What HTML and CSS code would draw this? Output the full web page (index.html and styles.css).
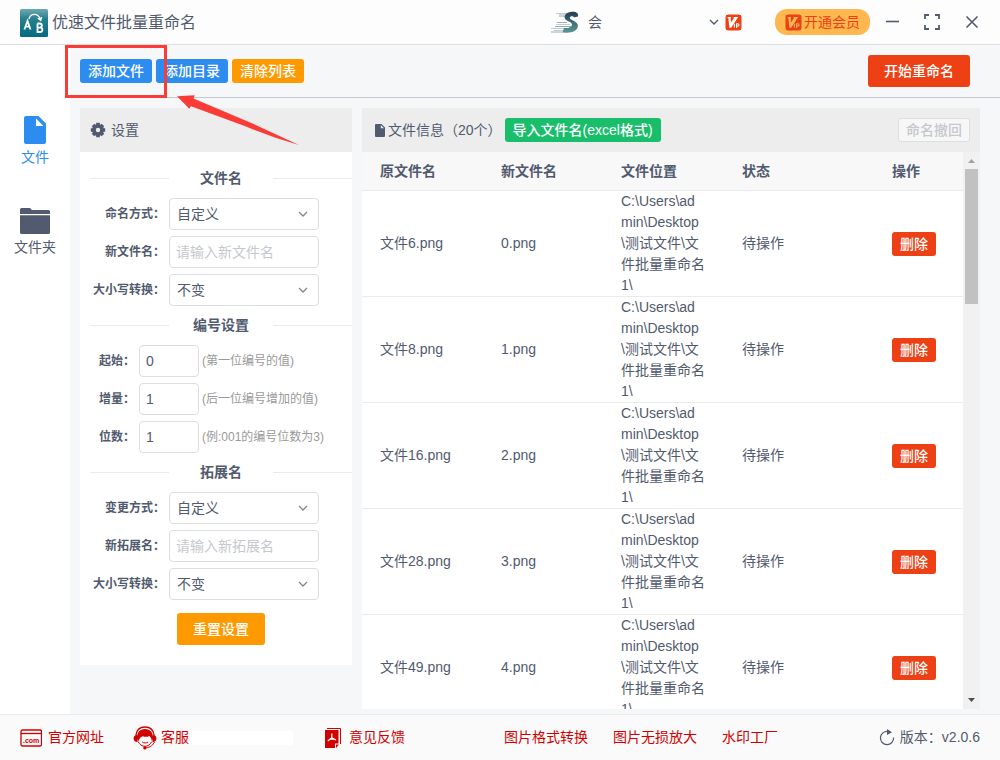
FILE: index.html
```html
<!DOCTYPE html>
<html lang="zh-CN">
<head>
<meta charset="utf-8">
<title>优速文件批量重命名</title>
<link rel="stylesheet" href="styles.css">
</head>
<body>
<svg class="defs" width="0" height="0" aria-hidden="true">
  <symbol id="vip" viewBox="0 0 17 17">
    <rect width="17" height="17" rx="3" fill="#ed4014"/>
    <path class="vip-mark" d="M2 3h4.200l-.5 1 .3 4.600L9 4l-.8-1h5L6.200 13.800H4.400L3.300 4z"/>
    <path class="vip-line" d="M9.400 9.800v3.800M11.600 14V9.800h1.300a1.100 1.100 0 0 1 0 2.200h-1.300" fill="none" stroke-width="1.100"/>
  </symbol>
  <symbol id="chevron" viewBox="0 0 10 6">
    <path d="M1 1l4 4 4-4" fill="none" stroke="currentColor" stroke-width="1.300"/>
  </symbol>
</svg>

<header class="titlebar">
  <svg class="logo" width="28" height="28" viewBox="0 0 28 28" aria-hidden="true">
    <defs><linearGradient id="teal" x1="0" y1="0" x2="0" y2="1"><stop offset="0" stop-color="#6fa9b2"/><stop offset=".35" stop-color="#26808f"/><stop offset="1" stop-color="#046a80"/></linearGradient></defs>
    <rect width="28" height="28" rx="1.500" fill="url(#teal)"/>
    <path d="M4.400 20.500L7.500 12l3 8.500M5.400 17.600h4.200M17.500 14.500v8.500h2.700a2.200 2.200 0 0 0 0-4.400h-2.700M17.500 14.500h2.300a2 2 0 0 1 0 4.100" fill="none" stroke="#fff" stroke-width="1.800"/>
    <path d="M9 10c1.500-6 9-6.500 11.500.5M17.800 9.200l2.900 2.200.9-3.300" fill="none" stroke="#fff" stroke-width="1.400"/>
  </svg>
  <h1 class="title">优速文件批量重命名</h1>
  <button class="user" type="button">
    <svg width="30" height="24" viewBox="0 0 30 24" aria-hidden="true">
      <defs><linearGradient id="ess" x1="0" y1="0" x2="0" y2="1"><stop offset="0" stop-color="#26394b"/><stop offset=".5" stop-color="#3d6f7b"/><stop offset="1" stop-color="#5c9792"/></linearGradient></defs>
      <path d="M6 3.500h15M9 6.500h8M6 14.500h14M1 18.500h14M4 20.500h12" stroke="#c3ced3" stroke-width="1.200"/>
      <path d="M9 5h9M7 12.500h10M5 16.500h16M1 22h16" stroke="#93b3b8" stroke-width="1.200"/>
      <path d="M28 6.500c.8-3.500-2-5-6-4.700-5 .3-8 3-7.300 6.200.6 3.300 7.600 3.600 7.300 6.700-.2 2.600-4 3.500-8 3.300l-1.500 4.300c8 1.400 15-.8 15.400-6.300.4-5-8.200-5.600-8.100-8.300.1-1.600 3.400-2.300 4.200-.2z" fill="url(#ess)"/>
    </svg>
    <span class="user-name">会</span>
    <svg width="10" height="6" aria-hidden="true"><use href="#chevron"/></svg>
    <svg class="vip" width="17" height="17" aria-hidden="true"><use href="#vip"/></svg>
  </button>
  <button class="join" type="button">
    <svg class="vip vip-gold" width="17" height="17" aria-hidden="true"><use href="#vip"/></svg>开通会员
  </button>
  <div class="window-controls">
    <button type="button" aria-label="最小化"><svg width="16" height="16" viewBox="0 0 16 16"><path d="M2 7.500h13" stroke="currentColor" stroke-width="1.600"/></svg></button>
    <button type="button" aria-label="最大化"><svg width="16" height="16" viewBox="0 0 16 16"><path d="M1 5V1h4M11 1h4v4M15 11v4h-4M5 15H1v-4" fill="none" stroke="currentColor" stroke-width="1.800"/></svg></button>
    <button type="button" aria-label="关闭"><svg width="16" height="16" viewBox="0 0 16 16"><path d="M2.500 2.500l11 11M13.500 2.500l-11 11" stroke="currentColor" stroke-width="1.600"/></svg></button>
  </div>
</header>

<div class="workspace">
  <nav class="sidebar">
    <a class="nav-item active" href="#files">
      <svg width="22" height="28" viewBox="0 0 22 28" aria-hidden="true"><path fill-rule="evenodd" d="M2 0h12.500L22 7.500V26a2 2 0 0 1-2 2H2a2 2 0 0 1-2-2V2a2 2 0 0 1 2-2zm10 2.500v7.500h7.500z" fill="currentColor"/></svg>
      文件
    </a>
    <a class="nav-item" href="#folders">
      <svg width="30" height="26" viewBox="0 0 30 26" aria-hidden="true"><path d="M0 6V1.500Q0 0 1.500 0H10l2 2h16.500Q30 2 30 3.500V6zM0 7.200h30V24.500q0 1.500-1.500 1.500h-27Q0 26 0 24.500z" fill="currentColor"/></svg>
      文件夹
    </a>
  </nav>

  <main class="main">
    <div class="toolbar">
      <button class="btn primary" type="button">添加文件</button>
      <button class="btn primary" type="button">添加目录</button>
      <button class="btn warning" type="button">清除列表</button>
      <button class="btn danger large start" type="button">开始重命名</button>
    </div>

    <div class="panels">
      <section class="settings">
        <h2 class="panel-head">
          <svg width="16" height="16" viewBox="0 0 16 16" aria-hidden="true">
            <path d="M8 .8v14.400M.8 8h14.400M3 3l10 10M13 3L3 13" stroke="currentColor" stroke-width="3.600"/>
            <circle cx="8" cy="8" r="6" fill="currentColor"/><circle cx="8" cy="8" r="2.200" fill="#ededed"/>
          </svg>
          <span>设置</span>
        </h2>
        <form class="form">
          <h3 class="divider"><span>文件名</span></h3>
          <div class="fields">
            <div class="field"><label for="naming">命名方式：</label><span class="select"><select id="naming"><option>自定义</option></select><svg width="10" height="6" aria-hidden="true"><use href="#chevron"/></svg></span></div>
            <div class="field"><label for="newname">新文件名：</label><input id="newname" type="text" placeholder="请输入新文件名"></div>
            <div class="field"><label for="case1">大小写转换：</label><span class="select"><select id="case1"><option>不变</option></select><svg width="10" height="6" aria-hidden="true"><use href="#chevron"/></svg></span></div>
          </div>
          <h3 class="divider"><span>编号设置</span></h3>
          <div class="fields numbers">
            <div class="field"><label for="from">起始：</label><input id="from" type="text" value="0"><span class="hint">(第一位编号的值)</span></div>
            <div class="field"><label for="step">增量：</label><input id="step" type="text" value="1"><span class="hint">(后一位编号增加的值)</span></div>
            <div class="field"><label for="digits">位数：</label><input id="digits" type="text" value="1"><span class="hint">(例:001的编号位数为3)</span></div>
          </div>
          <h3 class="divider"><span>拓展名</span></h3>
          <div class="fields">
            <div class="field"><label for="change">变更方式：</label><span class="select"><select id="change"><option>自定义</option></select><svg width="10" height="6" aria-hidden="true"><use href="#chevron"/></svg></span></div>
            <div class="field"><label for="newext">新拓展名：</label><input id="newext" type="text" placeholder="请输入新拓展名"></div>
            <div class="field"><label for="case2">大小写转换：</label><span class="select"><select id="case2"><option>不变</option></select><svg width="10" height="6" aria-hidden="true"><use href="#chevron"/></svg></span></div>
          </div>
          <button class="btn warning large reset" type="button">重置设置</button>
        </form>
      </section>

      <section class="files">
        <div class="panel-head files-head">
          <svg width="10" height="13" viewBox="0 0 10 13" aria-hidden="true"><path fill-rule="evenodd" d="M1 0h5.500L10 3.500V12q0 1-1 1H1q-1 0-1-1V1Q0 0 1 0zm4.800 1v3.200H9z" fill="currentColor"/></svg>
          <h2 class="files-title">文件信息（20个）</h2>
          <button class="btn success" type="button">导入文件名(excel格式)</button>
          <button class="btn undo" type="button" disabled>命名撤回</button>
        </div>
        <div class="list">
          <div class="list-view">
            <table>
              <colgroup><col class="c-old"><col class="c-new"><col class="c-path"><col class="c-state"><col></colgroup>
              <thead><tr><th>原文件名</th><th>新文件名</th><th>文件位置</th><th>状态</th><th>操作</th></tr></thead>
              <tbody>
                <tr><td>文件6.png</td><td>0.png</td><td>C:\Users\admin\Desktop\测试文件\文件批量重命名1\</td><td>待操作</td><td><button class="btn danger" type="button">删除</button></td></tr>
                <tr><td>文件8.png</td><td>1.png</td><td>C:\Users\admin\Desktop\测试文件\文件批量重命名1\</td><td>待操作</td><td><button class="btn danger" type="button">删除</button></td></tr>
                <tr><td>文件16.png</td><td>2.png</td><td>C:\Users\admin\Desktop\测试文件\文件批量重命名1\</td><td>待操作</td><td><button class="btn danger" type="button">删除</button></td></tr>
                <tr><td>文件28.png</td><td>3.png</td><td>C:\Users\admin\Desktop\测试文件\文件批量重命名1\</td><td>待操作</td><td><button class="btn danger" type="button">删除</button></td></tr>
                <tr><td>文件49.png</td><td>4.png</td><td>C:\Users\admin\Desktop\测试文件\文件批量重命名1\</td><td>待操作</td><td><button class="btn danger" type="button">删除</button></td></tr>
              </tbody>
            </table>
          </div>
          <div class="scrollbar" aria-hidden="true">
            <svg width="17" height="17" viewBox="0 0 17 17"><path d="M5 11l3.500-4 3.500 4z" fill="#a3a3a3"/></svg>
            <div class="thumb"></div>
            <svg class="down" width="17" height="17" viewBox="0 0 17 17"><path d="M5 6h7l-3.500 4z" fill="#505050"/></svg>
          </div>
        </div>
      </section>
    </div>
  </main>
</div>

<footer class="footer">
  <a class="site" href="#site">
    <svg width="22" height="18" viewBox="0 0 22 18" aria-hidden="true"><rect x="1" y="1" width="20.500" height="16" rx="1.500" fill="none" stroke="#d00000" stroke-width="1.300"/><path d="M1 4.500h20.500" stroke="#d00000" stroke-width="1.300"/><text x="3" y="14" class="com">.com</text></svg>
    官方网址
  </a>
  <a class="service" href="#service">
    <svg width="24" height="24" viewBox="0 0 24 24" aria-hidden="true">
      <path d="M2.800 9.500C3.500 4 7 1 12 1s8.500 3 9.200 8.500" fill="none" stroke="#d00000" stroke-width="1.300"/>
      <path d="M4 13C3.500 6.500 7 3 12 3s8.500 3.500 8 10l-1.200 2.500c0-2.500-1-4.500-2.500-5.500-2.300 1.300-5 .8-6.300.2-2 0-3.800 2.300-4.800 5.300z" fill="#d00000"/>
      <path d="M4 8.800C1.800 9 .6 10.500.6 12.500S2 16 4.500 16.300zM20 8.800c2.200.2 3.400 1.700 3.400 3.700s-1.400 3.500-3.900 3.800z" fill="#d00000"/>
      <path d="M5 15.500c1.500 3 4 4.800 7 4.800 2.800 0 5.300-1.800 6.600-4.500M9.200 16c2 1.300 4 1.300 6 0M21.500 15.800c-1.200 3.200-4 5.500-9 6.200" fill="none" stroke="#d00000" stroke-width="1"/>
      <circle cx="11.800" cy="21.900" r="1.600" fill="#d00000"/>
    </svg>
    客服<span class="contact"></span>
  </a>
  <a class="feedback" href="#feedback">
    <svg width="18" height="20" viewBox="0 0 18 20" aria-hidden="true">
      <path d="M3 .5h13.500V16" fill="none" stroke="#d00000" stroke-width="1"/>
      <path d="M1 2h13.500v13.500H11V20H1z" fill="#d00000"/><path d="M12 16.500h3L12 20z" fill="#d00000"/>
      <path d="M7.800 5.500v4.300l-4 3.200M7.800 9.800l4.200 2.200M5.500 11.300l4.500-.4" fill="none" stroke="#fff" stroke-width="1.300"/>
    </svg>
    意见反馈
  </a>
  <div class="promo">
    <a href="#convert">图片格式转换</a>
    <a href="#enlarge">图片无损放大</a>
    <a href="#watermark">水印工厂</a>
  </div>
  <button class="version" type="button">
    <svg width="16" height="17" viewBox="0 0 16 17" aria-hidden="true"><path d="M9 2.500a6.600 6.600 0 1 0 5.600 6" fill="none" stroke="currentColor" stroke-width="1.200"/><path d="M8 0l5 3.200L8 6z" fill="currentColor"/></svg>
    版本：<span>v2.0.6</span>
  </button>
</footer>

<svg class="callout" width="236" height="102" viewBox="0 0 236 102" aria-hidden="true">
  <rect x="1.500" y="1.500" width="99" height="50" fill="none" stroke="#fb3b36" stroke-width="3"/>
  <path d="M112 51.300l17.700-1-1.200 3.200 59 25L234 100q-26-7-53-18.500L126 61.300l-1.700 2.400z" fill="#fb3b36"/>
</svg>
</body>
</html>
```

FILE: styles.css
```css
* { box-sizing: border-box; }

body {
  margin: 0;
  height: 100vh;
  display: flex;
  flex-direction: column;
  position: relative;
  overflow: hidden;
  background: #f5f7f9;
  color: #515a6e;
  font: 14px/21px "Liberation Sans", "Noto Sans CJK SC", sans-serif;
}

button, input, select { font: inherit; color: inherit; }
button { border: 0; background: none; padding: 0; white-space: nowrap; }
a { text-decoration: none; color: inherit; }
h1, h2, h3 { margin: 0; font-weight: normal; font-size: 14px; }
svg { display: block; flex: none; }
.defs { position: absolute; }

/* Title bar */
.titlebar {
  flex: none;
  height: 45px;
  display: flex;
  align-items: center;
  padding: 0 20px;
  background: #fdfdfd;
  border-bottom: 1px solid #dcdee2;
}
.logo { margin: 2px 4px 0 0; }
.title { font-size: 16px; }
.user { display: flex; align-items: center; width: 192px; margin-left: auto; }
.user-name { flex: 1; text-align: left; margin-left: 8px; }
.vip { margin-left: 6px; fill: #fff; stroke: #fff; }
.vip-mark { stroke: none; }
.vip-gold { margin: 0 2px 0 0; fill: #ffb74f; stroke: #ffb74f; }
.join {
  display: flex;
  align-items: center;
  height: 26px;
  margin-left: 33px;
  padding: 0 10px;
  border-radius: 12px;
  background: #ffb74f;
  color: #ed4014;
}
.window-controls { display: flex; gap: 24px; margin-left: 14px; }

/* Side navigation */
.workspace { flex: 1; min-height: 0; display: flex; }
.sidebar {
  flex: none;
  width: 70px;
  padding-top: 71px;
  background: #fff;
  display: flex;
  flex-direction: column;
  gap: 40px;
}
.nav-item { display: flex; flex-direction: column; align-items: center; gap: 3px; }
.active { color: #2d8cf0; }

/* Toolbar */
.main { flex: 1; min-width: 0; display: flex; flex-direction: column; }
.toolbar {
  flex: none;
  height: 53px;
  display: flex;
  align-items: center;
  gap: 4px;
  padding: 0 30px 0 10px;
  border-bottom: 1px solid #c5c8ce;
}
.btn {
  height: 24px;
  line-height: 22px;
  padding: 0 8px;
  border-radius: 3px;
  color: #fff;
  font-weight: 500;
}
.toolbar .btn { line-height: 24px; }
.large { height: 32px; padding: 0 16px; }
.primary { background: #2d8cf0; }
.warning { background: #ff9900; }
.danger { background: #ed4014; }
.success { background: #19be6b; }
.start { margin-left: auto; }

/* Panels */
.panels { flex: 1; min-height: 0; display: flex; gap: 10px; align-items: flex-start; padding: 10px 20px 5px 10px; }
.panel-head { height: 44px; display: flex; align-items: center; background: #ededed; }
.settings { flex: none; width: 272px; background: #fff; }
.settings .panel-head { padding-left: 10px; gap: 5px; }
.form { padding: 7px 0 20px; }
.divider {
  display: flex;
  align-items: center;
  height: 39px;
  padding-left: 10px;
  font-weight: bold;
}
.divider::before, .divider::after { content: ""; flex: 1; height: 1px; background: #e8eaec; }
.divider span { width: 104px; text-align: center; }
.fields { display: flex; flex-direction: column; gap: 6px; }
.field { display: flex; align-items: center; height: 32px; }
.field label { width: 85px; margin-right: 4px; text-align: right; font-size: 12px; font-weight: bold; }
.numbers label { width: 55px; }
.select { position: relative; width: 150px; }
.select svg { position: absolute; right: 11px; top: 13px; color: #808695; }
.field input, .field select {
  width: 150px;
  height: 32px;
  padding: 0 7px;
  border: 1px solid #dcdee2;
  border-radius: 4px;
  background: #fff;
  appearance: none;
}
.field input { padding: 0 6px; outline: none; }
.field input::placeholder { color: #c5c8ce; }
.field select { display: block; }
.numbers .field input { width: 60px; }
.hint { margin-left: 3px; font-size: 12px; color: #999; }
.reset { display: block; margin: 13px 0 0 97px; }

/* File list */
.files { flex: 1; min-width: 0; align-self: stretch; display: flex; flex-direction: column; }
.files-head { flex: none; padding: 0 10px 0 13px; }
.files-title { margin: 0 3px; white-space: nowrap; }
.undo { margin-left: auto; padding: 0 7px; border: 1px solid #dcdee2; background: #f7f7f7; color: #c5c8ce; }
.list { flex: 1; min-height: 0; display: flex; }
.list-view { flex: 1; min-width: 0; overflow: hidden; background: #fff; }
table { width: 100%; table-layout: fixed; border-collapse: separate; border-spacing: 0; }
.c-old, .c-path { width: 121px; }
.c-new { width: 120px; }
.c-state { width: 150px; }
th, td { padding: 0 18px; border-bottom: 1px solid #e8eaec; text-align: left; vertical-align: middle; word-break: break-all; }
th { height: 39px; background: #f8f8f9; }
td .btn { display: block; }
.scrollbar { flex: none; width: 17px; display: flex; flex-direction: column; background: #f1f1f1; }
.thumb { height: 135px; margin: 0 2px; background: #c1c1c1; }
.down { margin-top: auto; }

/* Footer */
.footer {
  flex: none;
  height: 46px;
  display: flex;
  align-items: center;
  padding: 0 20px;
  background: #fafafa;
  border-top: 1px solid #e8eaec;
  color: #d00000;
  white-space: nowrap;
}
.footer a { display: flex; align-items: center; }
.site { gap: 6px; }
.service { gap: 4px; margin-left: 29px; }
.service .contact { width: 103px; height: 14px; margin-left: -3px; background: #fff; }
.feedback { gap: 7px; margin-left: 31px; }
.com { font: bold 7px "Liberation Sans", sans-serif; fill: #d00000; }
.promo { display: flex; gap: 25px; margin-left: 99px; }
.version { display: flex; align-items: center; gap: 5px; margin-left: auto; color: #515a6e; }
.version span { margin-left: -5px; }

/* Highlight over the first toolbar button */
.callout { position: absolute; left: 65px; top: 45px; pointer-events: none; }
```
